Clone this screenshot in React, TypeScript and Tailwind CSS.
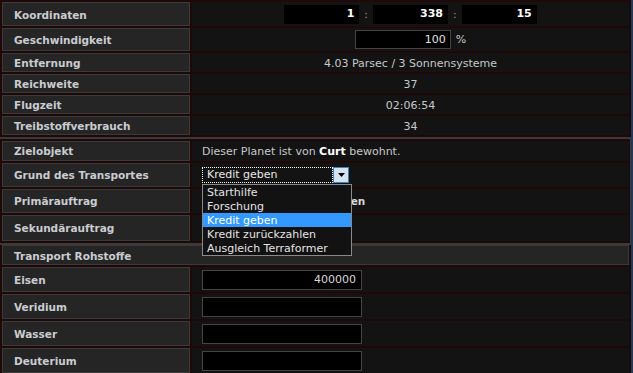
import React from "react";

const font = { fontFamily: '"DejaVu Sans", Verdana, sans-serif' };

const Label = ({ children, h }: { children: React.ReactNode; h: string }) => (
  <div
    className={`w-[188px] shrink-0 ${h} flex items-center pl-[11px] pt-[3px] border border-[#3a3a3a] bg-[#252525] text-[10.5px] font-bold text-[#c9ccd0]`}
  >
    {children}
  </div>
);

const Row = ({
  label,
  h,
  children,
  center = false,
}: {
  label: string;
  h: string;
  children?: React.ReactNode;
  center?: boolean;
}) => (
  <div className="flex gap-[2px]">
    <Label h={h}>{label}</Label>
    <div
      className={`flex-1 ${h} bg-[#131313] flex items-center text-[11px] text-[#c8c8c8] ${
        center ? "justify-center" : "pl-[10px]"
      }`}
    >
      {children}
    </div>
  </div>
);

const Txt = ({ children }: { children: React.ReactNode }) => <span className="pt-[3px]">{children}</span>;

const CoordBox = ({ value }: { value: string }) => (
  <div className="w-[75px] h-[19px] bg-black flex items-center justify-end pr-[5px] pt-[1px] text-[11px] font-bold text-white">
    {value}
  </div>
);

const Colon = () => <span className="mx-[5px] pt-[2px] text-[11px] text-[#9a9a9a]">:</span>;

const ResInput = ({ value = "" }: { value?: string }) => (
  <div className="w-[160px] h-[20px] bg-black border border-[#444] flex items-center justify-end pr-[5px] pt-[1px] text-[11px] text-[#d8d8d8]">
    {value}
  </div>
);

const options = [
  "Starthilfe",
  "Forschung",
  "Kredit geben",
  "Kredit zurückzahlen",
  "Ausgleich Terraformer",
];

export default function App() {
  return (
    <div style={font} className="w-[633px] h-[373px] overflow-hidden bg-[#1f0808] flex">
      <div className="w-[631px] flex flex-col relative">
        {/* Flugdaten */}
        <div className="flex flex-col gap-[2px] p-[2px]">
          <Row label="Koordinaten" h="h-[24px]" center>
            <CoordBox value="1" />
            <Colon />
            <CoordBox value="338" />
            <Colon />
            <CoordBox value="15" />
          </Row>
          <Row label="Geschwindigkeit" h="h-[23px]" center>
            <div className="w-[96px] h-[19px] bg-black border border-[#444] flex items-center justify-end pr-[4px] pt-[1px] text-[11px] text-[#e0e0e0]">
              100
            </div>
            <span className="ml-[5px] pt-[2px] text-[11px] text-[#c8c8c8]">%</span>
          </Row>
          <Row label="Entfernung" h="h-[19px]" center>
            <Txt>4.03 Parsec / 3 Sonnensysteme</Txt>
          </Row>
          <Row label="Reichweite" h="h-[19px]" center>
            <Txt>37</Txt>
          </Row>
          <Row label="Flugzeit" h="h-[19px]" center>
            <Txt>02:06:54</Txt>
          </Row>
          <Row label="Treibstoffverbrauch" h="h-[19px]" center>
            <Txt>34</Txt>
          </Row>
        </div>
        <div className="h-[2px] bg-[#3a3a3a]" />

        {/* Auftrag */}
        <div className="flex flex-col gap-[2px] pl-[2px] py-[2px] pr-[1px] border-r border-[#3a3a3a]">
          <Row label="Zielobjekt" h="h-[20px]">
            <Txt>
              Dieser Planet ist von <b className="text-white">Curt</b> bewohnt.
            </Txt>
          </Row>
          <Row label="Grund des Transportes" h="h-[24px]">
            <div className="flex h-[16px]">
              <div className="w-[131px] h-[16px] border border-dotted border-white flex items-center pl-[4px] pt-[1px] text-[11px] text-[#e8e8e8]">
                Kredit geben
              </div>
              <div className="w-[16px] h-[16px] border border-[#3d80c0] bg-[#d4e3f2] flex items-center justify-center">
                <svg width="7" height="4" viewBox="0 0 7 4">
                  <path d="M0 0h7L3.5 4z" fill="#000" />
                </svg>
              </div>
            </div>
          </Row>
          <Row label="Primärauftrag" h="h-[24px]">
            <span className="pt-[3px] text-[10.5px] font-bold text-[#d8d8d8]">Rohstoffe an Curt verleihen</span>
          </Row>
          <Row label="Sekundärauftrag" h="h-[26px]" />
        </div>
        <div className="h-[3px] bg-[#3a3a3a]" />

        {/* Rohstoffe */}
        <div className="flex flex-col gap-[2px] px-[2px]">
          <div className="h-[20px] flex items-center pl-[11px] pt-[3px] border border-[#3a3a3a] bg-[#252525] text-[10.5px] font-bold text-[#c9ccd0]">
            Transport Rohstoffe
          </div>
          <Row label="Eisen" h="h-[25px]">
            <ResInput value="400000" />
          </Row>
          <Row label="Veridium" h="h-[25px]">
            <ResInput />
          </Row>
          <Row label="Wasser" h="h-[25px]">
            <ResInput />
          </Row>
          <Row label="Deuterium" h="h-[25px]">
            <ResInput />
          </Row>
        </div>

        {/* offene Auswahlliste */}
        <div className="absolute left-[202px] top-[184px] w-[150px] bg-[#121212] border border-[#8a8a8a] flex flex-col">
          {options.map((o) => (
            <div
              key={o}
              className={`h-[14px] flex items-center pl-[4px] pt-[3px] text-[11px] ${
                o === "Kredit geben" ? "bg-[#3399ff] text-white" : "text-[#e4e4e4]"
              }`}
            >
              {o}
            </div>
          ))}
        </div>
      </div>
      <div className="w-[2px] bg-[#22395c]" />
    </div>
  );
}
